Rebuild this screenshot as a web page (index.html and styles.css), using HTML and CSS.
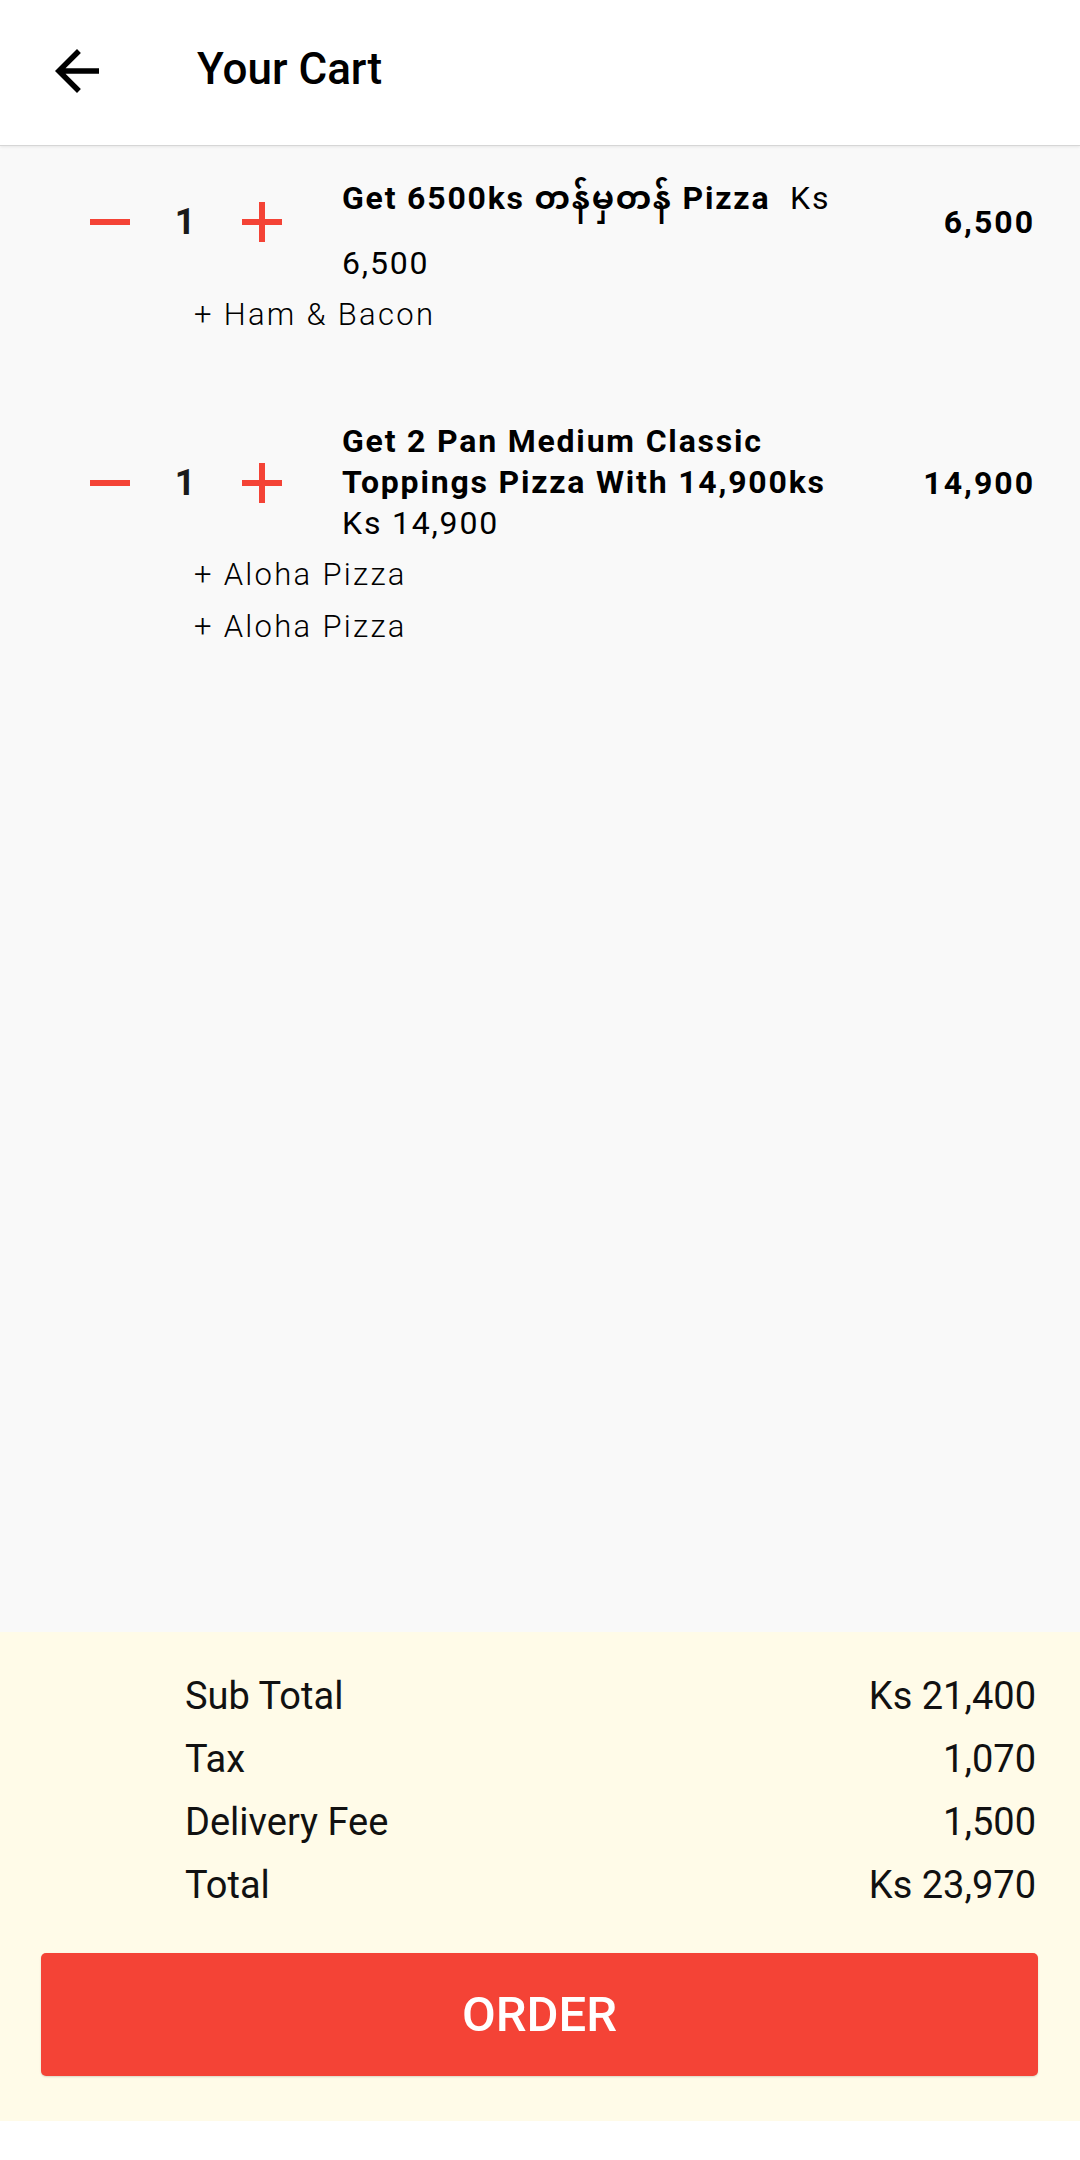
FILE: index.html
```html
<!DOCTYPE html>
<html lang="en">
<head>
    <meta charset="UTF-8">
    <title>Your Cart</title>
    <link rel="stylesheet" href="styles.css">
</head>
<body>
    <div class="page">
    <header class="topbar">
        <button class="back" aria-label="Back">
            <svg viewBox="0 0 24 24" width="66" height="66"><path d="M20 11H7.83l5.59-5.59L12 4l-8 8 8 8 1.41-1.41L7.83 13H20v-2z" fill="#000"/></svg>
        </button>
        <h1 class="title">Your Cart</h1>
    </header>

    <main class="cart">
        <section class="item">
            <div class="item-main">
                <div class="qty">
                    <button class="qty-btn" aria-label="Less">
                        <svg viewBox="0 0 40 40" width="40" height="40"><rect x="0" y="17" width="40" height="6" fill="#f44336"/></svg>
                    </button>
                    <span class="qty-num">1</span>
                    <button class="qty-btn" aria-label="More">
                        <svg viewBox="0 0 40 40" width="40" height="40"><rect x="0" y="17" width="40" height="6" fill="#f44336"/><rect x="17" y="0" width="6" height="40" fill="#f44336"/></svg>
                    </button>
                </div>
                <div class="item-info">
                    <span class="item-name">Get 6500ks <span class="mm">တန်မှတန်</span> Pizza</span>
                    <span class="item-unit">Ks 6,500</span>
                </div>
                <div class="item-total">6,500</div>
            </div>
            <ul class="addons">
                <li>+ Ham &amp; Bacon</li>
            </ul>
        </section>

        <section class="item">
            <div class="item-main">
                <div class="qty">
                    <button class="qty-btn" aria-label="Less">
                        <svg viewBox="0 0 40 40" width="40" height="40"><rect x="0" y="17" width="40" height="6" fill="#f44336"/></svg>
                    </button>
                    <span class="qty-num">1</span>
                    <button class="qty-btn" aria-label="More">
                        <svg viewBox="0 0 40 40" width="40" height="40"><rect x="0" y="17" width="40" height="6" fill="#f44336"/><rect x="17" y="0" width="6" height="40" fill="#f44336"/></svg>
                    </button>
                </div>
                <div class="item-info">
                    <span class="item-name">Get 2 Pan Medium Classic Toppings Pizza With 14,900ks</span>
                    <span class="item-unit">Ks 14,900</span>
                </div>
                <div class="item-total">14,900</div>
            </div>
            <ul class="addons">
                <li>+ Aloha Pizza</li>
                <li>+ Aloha Pizza</li>
            </ul>
        </section>
    </main>

    <footer class="summary">
        <div class="sum-row"><span>Sub Total</span><span>Ks 21,400</span></div>
        <div class="sum-row"><span>Tax</span><span>1,070</span></div>
        <div class="sum-row"><span>Delivery Fee</span><span>1,500</span></div>
        <div class="sum-row"><span>Total</span><span>Ks 23,970</span></div>
        <button class="order">ORDER</button>
    </footer>
    </div>
</body>
</html>
```

FILE: styles.css
```css
:root {
    --red: #f44336;
    --list-bg: #f9f9f9;
    --cream: #fffbe8;
    --text: #111111;
}
* {
    box-sizing: border-box;
}
body {
    margin: 0;
    background: #ffffff;
    font-family: Roboto, "Noto Sans", "Noto Sans Myanmar", "Padauk", "Myanmar Text", sans-serif;
    color: var(--text);
}
button {
    border: none;
    background: none;
    padding: 0;
    font-family: inherit;
    cursor: pointer;
}
.page {
    min-height: 2160px;
    display: flex;
    flex-direction: column;
    padding-bottom: 39px;
}

/* top bar */
.topbar {
    height: 146px;
    display: flex;
    align-items: center;
    padding: 0 0 8px 44px;
    background: #fff;
    border-bottom: 1px solid #d6d6d6;
    box-shadow: 0 1px 3px rgba(0,0,0,0.08);
    position: relative;
    z-index: 1;
}
.back {
    width: 66px;
    height: 66px;
    display: flex;
    margin-top: 4px;
}
.title {
    margin: 0 0 0 87px;
    font-size: 44px;
    font-weight: 500;
    color: #000;
}

/* cart list */
.cart {
    flex: 1;
    background: var(--list-bg);
}
.item {
    padding: 14px 47px 66px 90px;
}
.item-main {
    display: flex;
    align-items: center;
}
.qty {
    display: flex;
    align-items: center;
    flex-shrink: 0;
}
.qty-btn {
    width: 40px;
    height: 40px;
    display: flex;
}
.qty-num {
    width: 50px;
    margin: 0 32px 0 30px;
    text-align: center;
    font-size: 36px;
    font-weight: 700;
    color: #1a1a1a;
}
.item-info {
    flex: 1;
    margin-left: 60px;
    font-size: 32px;
    line-height: 41px;
    letter-spacing: 1.8px;
    color: #000;
}
.item-name {
    font-weight: 700;
    margin-right: 10px;
}
.mm::before {
    content: "";
    display: inline-block;
    width: 0;
    height: 83px;
    vertical-align: -34px;
}
.item-total {
    width: 183px;
    flex-shrink: 0;
    margin-right: -2px;
    text-align: right;
    font-size: 32px;
    font-weight: 700;
    letter-spacing: 2px;
    color: #000;
}
.addons {
    list-style: none;
    margin: 5px 0 0 104px;
    padding: 0;
    font-size: 31px;
    font-weight: 300;
    letter-spacing: 2.3px;
    line-height: 52px;
    color: #000;
}

/* totals */
.summary {
    background: var(--cream);
    padding: 33px 0 45px;
}
.sum-row {
    display: flex;
    justify-content: space-between;
    padding: 0 44px 0 185px;
    font-size: 38px;
    line-height: 63px;
}
.order {
    display: block;
    width: 997px;
    height: 123px;
    margin: 36px 0 0 41px;
    background: var(--red);
    border-radius: 5px;
    color: #fff;
    font-size: 49px;
    font-weight: 500;
    box-shadow: 0 1px 2px rgba(0,0,0,0.15);
}
```
